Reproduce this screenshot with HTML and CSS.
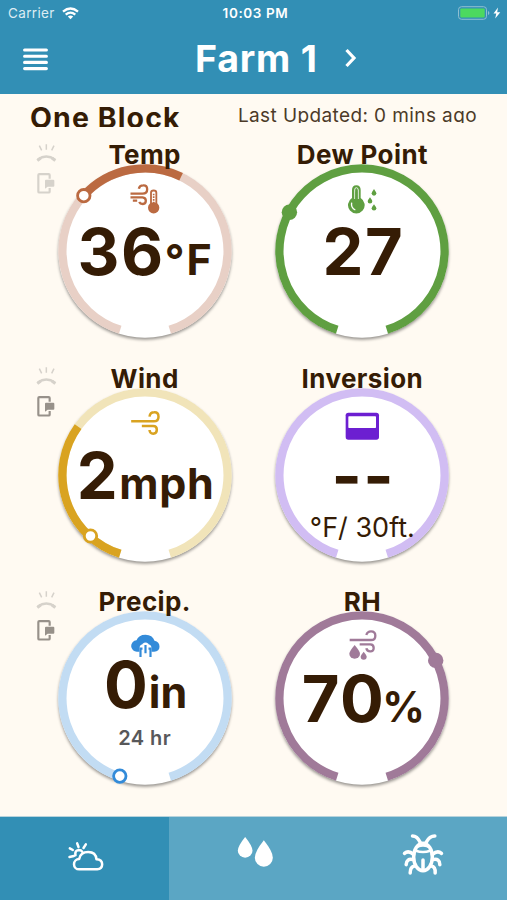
FILE: index.html
```html
<!DOCTYPE html>
<html lang="en">
<head>
<meta charset="utf-8">
<title>Farm 1</title>
<link rel="stylesheet" href="styles.css">
</head>
<body>
<svg class="defs" width="0" height="0">
  <defs>
    <g id="ring-icon" fill="none" stroke="currentColor">
      <path d="M53 73Q79 54 105 73" stroke-width="7"/>
      <path d="M52 76l10-8M106 76l-10-8" stroke-width="9"/>
      <path d="M58 31l7 14M79 27v16M102 31l-7 14" stroke-width="4.5"/>
    </g>
    <g id="device-icon">
      <path d="M89 130V119Q89 116.500 86 116.500H58Q55 116.500 55 119V169Q55 171.500 58 171.500H86Q89 171.500 89 169V158" fill="none" stroke="currentColor" stroke-width="6.5"/>
      <path d="M78 133H100Q103 133 103 136V151Q103 154 100 154H83L75 160V136Q75 133 78 133Z" fill="currentColor"/>
    </g>
    <path id="track" d="M-24.8 78.8A82.6 82.6 0 1 1 24.8 78.8" fill="none" stroke-width="8.3"/>
  </defs>
</svg>
<div class="app">
  <header class="header">
    <div class="status">
      <div class="carrier"><span>Carrier</span>
        <svg width="17" height="13" viewBox="0 0 17 13" fill="none" stroke="#fff" stroke-width="2.3"><path d="M1 4.6Q8.5-1.6 16 4.6M3.7 7.6Q8.5 3.6 13.3 7.6"/><path d="M8.5 12.2L5.8 9.5Q8.5 7.4 11.2 9.5Z" fill="#fff" stroke="none"/></svg>
      </div>
      <time class="clock">10:03 PM</time>
      <svg class="battery" width="43" height="14" viewBox="0 0 43 14"><rect x=".5" y=".7" width="28" height="12.6" rx="3" fill="none" stroke="#8fbfd2"/><rect x="2.3" y="2.4" width="24.4" height="9.2" rx="1" fill="#4cd95f"/><path d="M30 5v4q1.4-.6 1.4-2T30 5Z" fill="#8fbfd2"/><path d="M40 1.5L35.5 7.6H38.3L37.2 12.4L42.3 6.2H39.2Z" fill="#fff"/></svg>
    </div>
    <div class="nav">
      <svg class="menu" width="25" height="23" viewBox="0 0 25 23" stroke="#fff" stroke-width="3.1" stroke-linecap="round"><path d="M1.6 2H23.4M1.6 8.2H23.4M1.6 14.4H23.4M1.6 20.6H23.4"/></svg>
      <h1>Farm 1</h1>
      <svg class="chevron" width="14" height="20" viewBox="0 0 14 20" fill="none" stroke="#fff" stroke-width="3.2"><path d="M2.500 2L10 10L2.500 18"/></svg>
    </div>
  </header>

  <div class="block-bar">
    <h2>One Block</h2>
    <p>Last Updated: 0 mins ago</p>
  </div>

  <main class="grid">
    <section class="card">
      <svg class="alerts" viewBox="45 20 66 160"><use href="#ring-icon" class="off"/><use href="#device-icon" class="off"/></svg>
      <div class="gauge">
        <svg class="dial" viewBox="-92 -92 184 184"><circle class="disc" r="86.7"/><use href="#track" stroke="#e8d0c6"/><path d="M-61.2-55.5A82.6 82.6 0 0 1 36.1-74.3" fill="none" stroke="#bb6a41" stroke-width="8.3"/><circle cx="-61.2" cy="-55.3" r="6.2" fill="#fff" stroke="#bb6a41" stroke-width="2.8"/></svg>
        <svg class="glyph" viewBox="319.5 138 108 108" fill="none" stroke="#bb6a41" stroke-width="7"><path d="M330 176H366Q380 176 380 163T368 151Q357 151 355 161M330 187H366Q376 188 376 197T367 207Q359 207 356 201M337 197H350"/><path d="M391.500 209V173Q391.500 166.500 399.500 166.500T407.500 173V209" stroke-width="5.5"/><circle cx="399.500" cy="218.500" r="17" fill="#bb6a41" stroke="none"/><path d="M399.500 213V176" stroke-width="5" stroke-dasharray="5 3"/></svg>
        <p class="value temp">36<span>°F</span></p>
      </div>
      <h3>Temp</h3>
    </section>

    <section class="card">
      <div class="gauge">
        <svg class="dial" viewBox="-92 -92 184 184"><circle class="disc" r="86.7"/><use href="#track" stroke="#5f9f41"/><circle cx="-72.600" cy="-38.700" r="7.700" fill="#5f9f41"/></svg>
        <svg class="glyph" viewBox="238 138 108 108"><path d="M262 189V165Q262 151 275 151T288 165V189A25 25 0 1 1 262 189Z" fill="#5f9f41"/><path d="M270 192V165Q270 158 275 158T281 165V192" fill="none" stroke="#fff" stroke-width="2.500"/><path d="M275 170V198" stroke="#5f9f41" stroke-width="5"/><path d="M261 203Q258 219 272 225" fill="none" stroke="#fff" stroke-width="4"/><g fill="#5f9f41"><path d="M328 162Q321 172 321 175A7 7 0 0 0 335 175Q335 172 328 162Z"/><path d="M316 187Q309 196 309 199A7 6.500 0 0 0 323 199Q323 196 316 187Z"/><path d="M328 208Q321 217 321 220A7 6.500 0 0 0 335 220Q335 217 328 208Z"/></g></svg>
        <p class="value dew">27</p>
      </div>
      <h3>Dew Point</h3>
    </section>

    <section class="card">
      <svg class="alerts" viewBox="45 20 66 160"><use href="#ring-icon" class="off"/><use href="#device-icon" class="on"/></svg>
      <div class="gauge">
        <svg class="dial" viewBox="-92 -92 184 184"><circle class="disc" r="86.7"/><use href="#track" stroke="#f1e4b9"/><path d="M-24.8 78.8A82.6 82.6 0 0 1-66.9-48.4" fill="none" stroke="#d9a321" stroke-width="8.3"/><circle cx="-54.500" cy="61" r="6.200" fill="#fff" stroke="#d9a321" stroke-width="2.800"/></svg>
        <svg class="glyph" viewBox="319.5 135 108 108" fill="none" stroke="#d9a321" stroke-width="7.500"><path d="M332 184H400Q414 184 414 170T401 157Q389 157 387 170M364 198H398Q409 198 409 209T398 221Q388 221 387 210"/></svg>
        <p class="value wind">2<span>mph</span></p>
      </div>
      <h3>Wind</h3>
    </section>

    <section class="card">
      <div class="gauge">
        <svg class="dial" viewBox="-92 -92 184 184"><circle class="disc" r="86.7"/><use href="#track" stroke="#d1bdf3"/></svg>
        <svg class="glyph" viewBox="238 135 108 108"><rect x="243" y="158" width="100" height="81" rx="8" fill="#6c1fd1"/><rect x="251" y="169" width="83" height="35" rx="2" fill="#fff"/></svg>
        <p class="value inv">--</p>
        <p class="note per">°F/ 30ft.</p>
      </div>
      <h3>Inversion</h3>
    </section>

    <section class="card">
      <svg class="alerts" viewBox="45 20 66 160"><use href="#ring-icon" class="off"/><use href="#device-icon" class="on"/></svg>
      <div class="gauge">
        <svg class="dial" viewBox="-92 -92 184 184"><circle class="disc" r="86.7"/><use href="#track" stroke="#c2dcf3"/><circle cx="-25.200" cy="78.100" r="6.200" fill="#fff" stroke="#338bd9" stroke-width="2.800"/></svg>
        <svg class="glyph" viewBox="319.5 146 108 108"><path d="M350 217A17 17 0 0 1 348 183Q354 166 375 166T402 184Q417 187 417 202Q417 215 401 217Z" fill="#338bd9"/><path d="M361 234V207Q361 199 369 199V196Q375 191 381 196V199Q389 199 389 207V234" fill="#fff" stroke="#fff" stroke-width="8" stroke-linejoin="round"/><path d="M360 233V208H366M375 222V197M390 233V208H384" fill="none" stroke="#338bd9" stroke-width="6.500"/></svg>
        <p class="value rain">0<span>in</span></p>
        <p class="note hours">24 hr</p>
      </div>
      <h3>Precip.</h3>
    </section>

    <section class="card">
      <div class="gauge">
        <svg class="dial" viewBox="-92 -92 184 184"><circle class="disc" r="86.7"/><use href="#track" stroke="#a07a99"/><circle cx="73.700" cy="-37.600" r="7.700" fill="#a07a99"/></svg>
        <svg class="glyph" viewBox="238 146 108 108" fill="none" stroke="#a07a99" stroke-width="7"><path d="M255 182H319Q332 182 332 169T319 156Q308 156 305 167M285 195H317Q327 195 327 206T316 216Q307 216 305 207"/><g fill="#a07a99" stroke="none"><path d="M270 197Q254 216 254 223A16 15 0 0 0 286 223Q286 216 270 197Z"/><path d="M297 217Q288 228 288 232A9 9 0 0 0 306 232Q306 228 297 217Z"/></g></svg>
        <p class="value rh">70<span>%</span></p>
      </div>
      <h3>RH</h3>
    </section>
  </main>

  <nav class="tabs">
    <a class="tab active"><svg viewBox="187.5 85 132 132" fill="none" stroke="#fff" stroke-width="7.500" stroke-linecap="round" stroke-linejoin="round"><path d="M236 194A15.500 15.500 0 0 1 236 163Q240 142 263 142T288 164Q305 165 305 179T290 194Z"/><path d="M225 152Q222 137 235 136Q242 136 245 141M208 131L217 136M230 116L234 127M256 119L249 130M207 157L220 154"/></svg></a>
    <a class="tab"><svg viewBox="694.5 85 132 132" fill="#fff"><path d="M734 97Q712 124 712 138A22 21 0 0 0 756 138Q756 124 734 97Z"/><path d="M790 107Q763 141 763 159A27 27 0 0 0 817 159Q817 141 790 107Z"/></svg></a>
    <a class="tab"><svg viewBox="1201.500 85 132 132" fill="none" stroke="#fff" stroke-width="10.500" stroke-linecap="round"><ellipse cx="1267.500" cy="157" rx="28" ry="41"/><path d="M1246 138Q1267.500 146 1289 138" stroke-width="8"/><path d="M1253 124Q1267.500 118 1282 124"/><path d="M1267.500 166V192M1236 94Q1250 94 1259 113M1303 94Q1287 94 1277 113M1239 149Q1224 136 1212 146M1296 149Q1311 136 1323 146M1238 165Q1218 160 1217 180M1297 165Q1318 160 1318 180M1242 184Q1229 186 1229 205M1293 184Q1305 186 1304 205"/></svg></a>
  </nav>
</div>
</body>
</html>
```
FILE: styles.css
```css
* { box-sizing: border-box; margin: 0; padding: 0; }
body {
  background: #fffaf2;
  color: #351c05;
  font-family: Inter, "Liberation Sans", sans-serif;
}
.defs { display: block; height: 0; }
.app { width: 507px; height: 900px; display: flex; flex-direction: column; overflow: hidden; }
svg { display: block; }

.header { height: 94px; background: #328fb5; color: #fff; flex: none; }
.status {
  height: 26px;
  padding: 0 6px 0 8px;
  display: grid;
  grid-template-columns: 1fr auto 1fr;
  align-items: center;
}
.carrier { display: flex; align-items: center; gap: 7.500px; font-size: 13.5px; line-height: 26px; color: #dcecf3; letter-spacing: .35px; }
.clock { font-size: 13.5px; font-weight: 600; line-height: 26px; letter-spacing: .6px; padding-left: 2px; }
.battery { justify-self: end; }
.nav { height: 68px; display: grid; grid-template-columns: 195px auto 1fr; align-items: start; }
.menu { margin: 22px 0 0 22.500px; }
.nav h1 { font-size: 37.500px; font-weight: 700; line-height: 44px; margin-top: 11px; letter-spacing: .8px; white-space: nowrap; }
.chevron { margin: 22px 0 0 26.500px; }

.block-bar { height: 33px; flex: none; display: flex; justify-content: space-between; padding: 0 30px 0 30px; overflow: hidden; }
.block-bar h2 { font-size: 28.500px; font-weight: 700; line-height: 32px; margin-top: 8px; white-space: nowrap; letter-spacing: 1.100px; }
.block-bar p { font-size: 19px; line-height: 22px; margin-top: 11px; height: 18px; overflow: hidden; white-space: nowrap; color: #4c3a28; letter-spacing: .400px; }

.grid { flex: none; height: 690px; padding: 0 35.800px; display: grid; grid-template-columns: 1fr 1fr; grid-auto-rows: 223.700px; }
.card { display: grid; }
.card > * { grid-area: 1 / 1; }
.alerts { width: 22px; height: 53.300px; margin: 14.700px 0 0 -.800px; justify-self: start; }
.off { color: #d6d2cb; }
.on { color: #97918a; }
.card h3 { font-size: 26px; font-weight: 700; line-height: 30px; margin-top: 13px; text-align: center; white-space: nowrap; letter-spacing: .4px; }
.gauge { width: 184px; height: 184px; margin-top: 32px; justify-self: center; display: grid; justify-items: center; align-items: start; }
.gauge > * { grid-area: 1 / 1; }
.dial { width: 184px; height: 184px; overflow: visible; }
.disc { fill: #fff; filter: drop-shadow(0 2px 1.500px rgba(0, 0, 0, .4)); }
.glyph { width: 36px; height: 36px; margin-top: 22px; }
.value { font-size: 65px; font-weight: 700; line-height: 78px; margin-top: 54px; padding-left: 2px; white-space: nowrap; letter-spacing: 1.500px; }
.value span { font-size: 43px; }
.temp span { letter-spacing: 2px; }
.wind span { letter-spacing: .700px; }
.value.rain { margin-top: 40px; letter-spacing: 0; }
.rain span { margin-left: 1px; }
.rh span { font-size: 42px; margin-left: -3px; letter-spacing: 0; }
.note { white-space: nowrap; }
.per { font-size: 27px; line-height: 32px; margin-top: 129px; }
.hours { font-size: 20px; font-weight: 600; line-height: 24px; margin-top: 119.500px; color: #58585a; letter-spacing: .4px; }

.tabs { height: 83px; flex: none; display: grid; grid-template-columns: repeat(3, 1fr); box-shadow: 0 -1px 0 #b8d3dc; }
.tab { background: #5ba6c4; display: flex; justify-content: center; padding-top: 16.300px; }
.tab svg { width: 44px; height: 44px; }
.tab.active { background: #328fb5; }
```
